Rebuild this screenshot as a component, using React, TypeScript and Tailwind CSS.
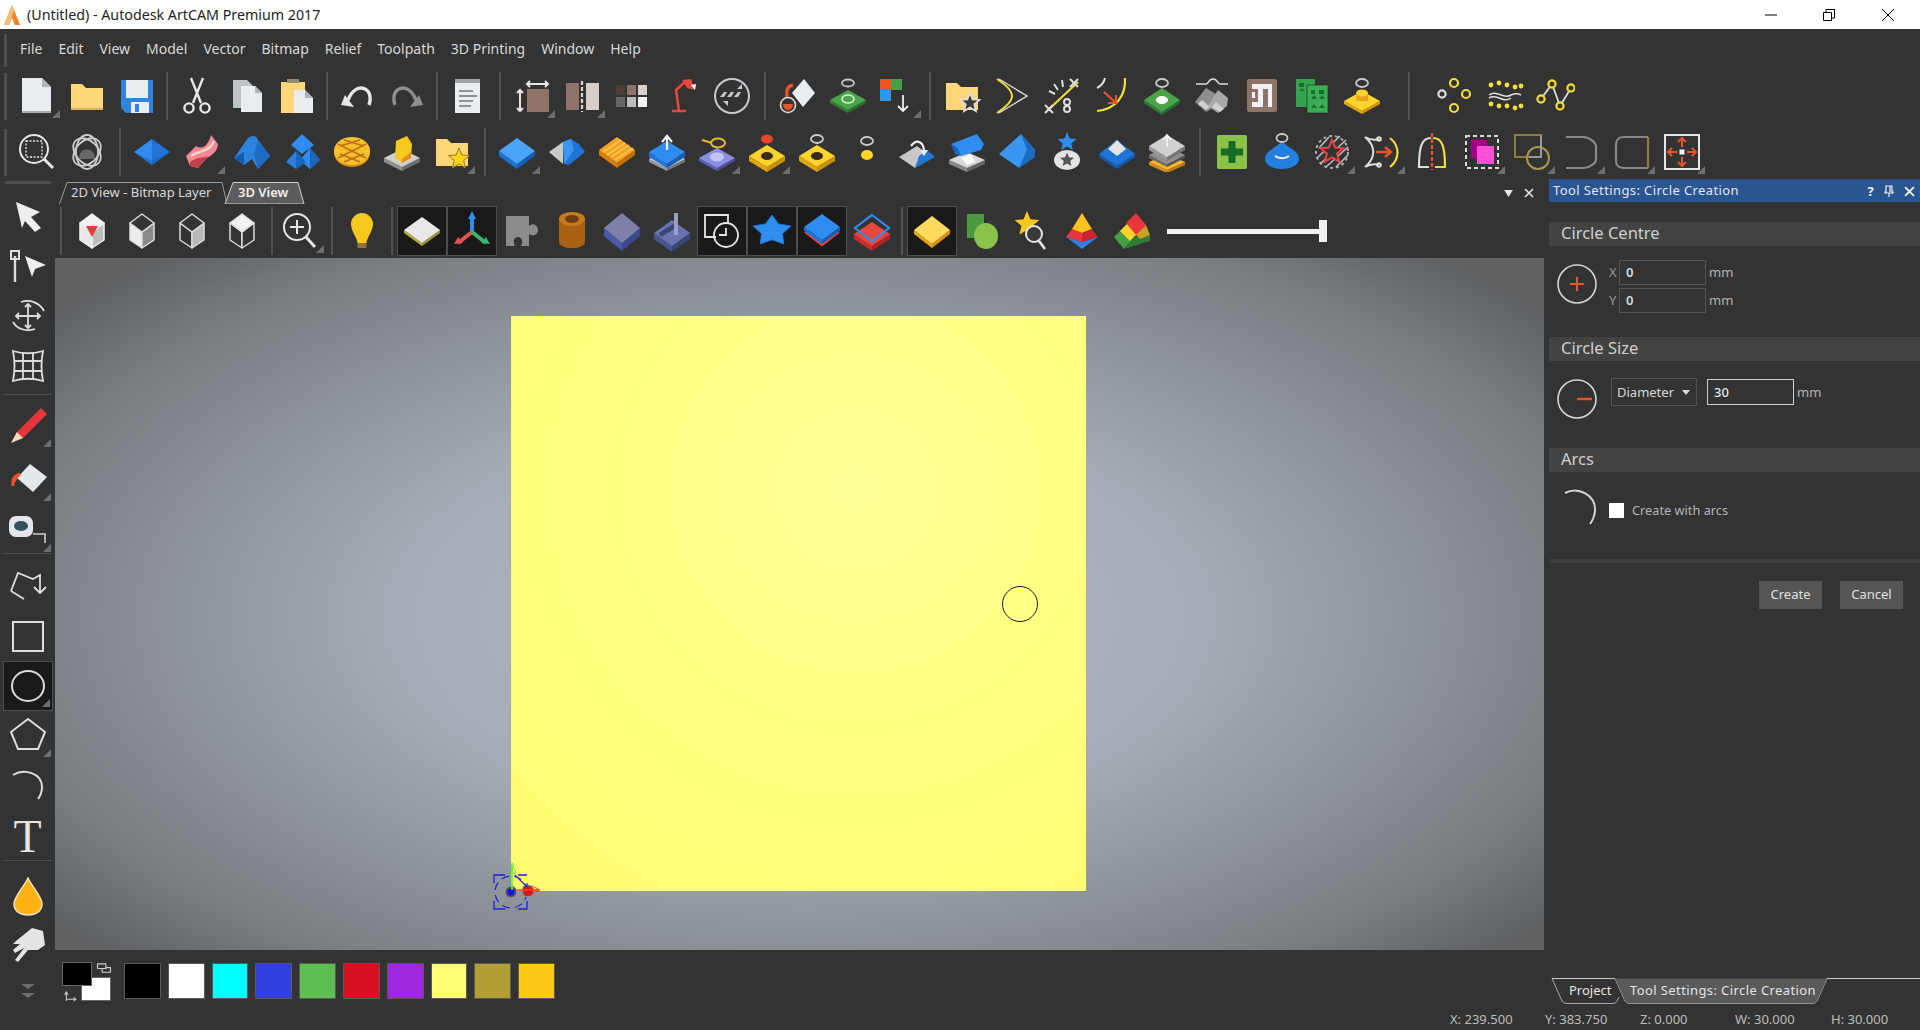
import React from 'react';

const W = '#e4e6e8';
const Y = '#f0dc3c';
const star = (cx: number, cy: number, R: number, r = R * 0.45) => {
  const p: string[] = [];
  for (let i = 0; i < 10; i++) {
    const a = -Math.PI / 2 + (i * Math.PI) / 5;
    const q = i % 2 ? r : R;
    p.push(`${(cx + q * Math.cos(a)).toFixed(1)},${(cy + q * Math.sin(a)).toFixed(1)}`);
  }
  return p.join(' ');
};
const Plate = ({ cx = 20, y = 22, w = 18, h = 11, d = 4, top, l, r }: { cx?: number; y?: number; w?: number; h?: number; d?: number; top: string; l: string; r: string }) => (
  <g>
    <polygon points={`${cx - w},${y} ${cx},${y + h} ${cx},${y + h + d} ${cx - w},${y + d}`} fill={l} />
    <polygon points={`${cx + w},${y} ${cx},${y + h} ${cx},${y + h + d} ${cx + w},${y + d}`} fill={r} />
    <polygon points={`${cx},${y - h} ${cx + w},${y} ${cx},${y + h} ${cx - w},${y}`} fill={top} />
  </g>
);
const Ring = ({ x = 20, y = 6, rx = 5, ry = 4, c = '#c8c8c8' }: { x?: number; y?: number; rx?: number; ry?: number; c?: string }) => (
  <ellipse cx={x} cy={y} rx={rx} ry={ry} fill="none" stroke={c} strokeWidth={1.8} />
);
const Folder = ({ c = '#ffd77a' }: { c?: string }) => <path d="M4 7h11l4 4h17v23H4Z" fill={c} />;
const Cube = ({ top, l, r, stroke = '#ddd' }: { top: string; l: string; r: string; stroke?: string }) => (
  <g stroke={stroke} strokeWidth={1.5} strokeLinejoin="round">
    <polygon points="8,12 20,21 20,37 8,29" fill={l} />
    <polygon points="32,12 20,21 20,37 32,29" fill={r} />
    <polygon points="20,3 32,12 20,21 8,12" fill={top} />
  </g>
);

const ICONS: Record<string, React.ReactNode> = {
  new: <g><path d="M5 2H25L34 11V37H5Z" fill="#e9edf1" /><path d="M25 2L34 11H25Z" fill="#aeb4b8" /><rect x="5" y="35" width="29" height="2" fill="#a9adb0" /></g>,
  open: <g><path d="M4 8h11l4 4h17v22H4Z" fill="#ffd77a" /><rect x="4" y="32" width="32" height="2" fill="#d9b45f" /></g>,
  save: <g><path d="M4 4H36V37H9L4 32Z" fill="#2f86dc" /><rect x="9" y="4" width="22" height="18" fill="#e9eef2" /><rect x="14" y="26" width="18" height="11" fill="#e9eef2" /><rect x="18" y="28" width="4" height="8" fill="#2f86dc" /></g>,
  cut: <g stroke={W} strokeWidth={2.4} fill="none"><path d="M14 2L24 27M26 2L16 27" /><circle cx="12" cy="32" r="4.6" /><circle cx="28" cy="32" r="4.6" /></g>,
  copy: <g><path d="M6 4H20L26 10V32H6Z" fill="#bfc4c6" /><path d="M14 10H28L35 17V36H14Z" fill="#e9edf1" /><path d="M28 10L35 17H28Z" fill="#aeb4b8" /></g>,
  paste: <g><rect x="4" y="6" width="24" height="31" fill="#ffd77a" /><rect x="10" y="3" width="12" height="4" fill="#9a8b6a" /><path d="M17 14H28L36 22V37H17Z" fill="#e9edf1" /><path d="M28 14L36 22H28Z" fill="#aeb4b8" /></g>,
  undo: <g fill="none" stroke={W} strokeWidth={3.4}><path d="M11 24C15 14 22 10 28 13C34 16 34 24 32 29" /><path d="M4 29L17 31L8 19Z" fill={W} stroke="none" /></g>,
  redo: <g fill="none" stroke="#8f8f8f" strokeWidth={3.4}><path d="M29 24C25 14 18 10 12 13C6 16 6 24 8 29" /><path d="M36 29L23 31L32 19Z" fill="#8f8f8f" stroke="none" /></g>,
  note: <g><rect x="8" y="3" width="25" height="34" fill="#e9edf1" /><rect x="8" y="3" width="25" height="4" fill="#9da3a6" /><path d="M12 15H26M12 20H30M12 25H26M12 30H24" stroke="#8b9296" strokeWidth={1.8} /></g>,
  resize: <g><rect x="15" y="13" width="22" height="23" fill="#8f7268" /><path d="M15 8H36M18 5L15 8L18 11M33 5L36 8L33 11M8 14V35M5 17L8 14L11 17M5 32L8 35L11 32" stroke={W} strokeWidth={2} fill="none" /></g>,
  split: <g><rect x="4" y="7" width="13" height="27" fill="#8f7268" /><rect x="24" y="7" width="13" height="27" fill="#d8cdc9" /><path d="M20 5V36" stroke="#d8d8d8" strokeWidth={2.2} strokeDasharray="4 2" /></g>,
  tiles: <g><rect x="4" y="9" width="9" height="10" fill="#4f3c37" /><rect x="15" y="9" width="9" height="10" fill="#8f7268" /><rect x="26" y="9" width="9" height="10" fill="#d9cfcb" /><rect x="4" y="21" width="9" height="10" fill="#666" /><rect x="15" y="21" width="9" height="10" fill="#bdbdbd" /><rect x="26" y="21" width="9" height="10" fill="#f3f3f3" /></g>,
  lamp: <g><path d="M10 35H24M17 35L14 14L24 5" stroke="#e8473f" strokeWidth={2.6} fill="none" /><path d="M20 4L29 3L33 14L25 12Z" fill="#e8473f" /><path d="M29 9L34 8L33 14Z" fill="#fff" /></g>,
  circleDots: <g><circle cx="20" cy="20" r="17" fill="none" stroke="#c9c9d0" strokeWidth={2} /><path d="M8 21l4-5h3l-3 5ZM15 21l4-5h3l-3 5ZM22 21l4-5h3l-3 5Z" fill="#c9c9d0" /><path d="M25 13l5-5v5ZM11 25l5 5v-5Z" fill="#c9c9d0" /></g>,
  pour: <g><polygon points="26,3 37,17 25,31 14,17" fill="#e9edf1" /><path d="M15 9C9 10 8 15 9 21" stroke="#e8552a" strokeWidth={3.4} fill="none" /><circle cx="10" cy="29" r="7.5" fill="none" stroke="#ddd" strokeWidth={1.6} /><path d="M5 28H15C15 32 12 34 10 34C8 34 5 32 5 28Z" fill="#e8552a" /></g>,
  greenRing: <g><Plate y={24} h={10} d={3} top="#4aa548" l="#2f8037" r="#276f30" /><ellipse cx="20" cy="23" rx="6" ry="4" fill="none" stroke="#d8ecd8" strokeWidth={1.6} /><Ring y={7} rx={6} ry={3.5} /></g>,
  palette: <g><rect x="2" y="3" width="11" height="11" fill="#f4511e" /><rect x="13" y="3" width="11" height="11" fill="#43a047" /><rect x="2" y="14" width="11" height="11" fill="#2f96e8" /><path d="M25 19V35M20 30L25 35L30 30" stroke="#eee" strokeWidth={1.8} fill="none" /></g>,
  folderStar: <g><Folder /><polygon points={star(28, 27, 10)} fill="#3a3a3a" stroke="#ddd" strokeWidth={1.8} /></g>,
  chevronY: <g fill="none" strokeWidth={2}><path d="M5 3C14 9 20 15 20 20C20 25 14 31 5 37" stroke={Y} /><path d="M7 3L35 20L7 37" stroke="#ddd" strokeWidth={1.4} /></g>,
  cutDots: <g stroke="#ddd" strokeWidth={2} fill="none"><path d="M5 35L36 6" stroke={Y} strokeWidth={2.2} /><path d="M3 29L11 37M3 37L11 29M28 3L36 11M28 11L36 3M12 8L16 14M20 4L21 11M7 15L13 18" /><circle cx="25" cy="26" r="3" /><circle cx="25" cy="33" r="3" /></g>,
  curveArrow: <g fill="none"><path d="M33 2C34 20 24 33 5 35" stroke={Y} strokeWidth={2.2} /><path d="M13 2C12 6 9 10 5 12" stroke="#ddd" strokeWidth={2} /><path d="M12 16L24 27M24 19V27H16" stroke="#e8552a" strokeWidth={2.2} /></g>,
  greenDot: <g><Plate y={24} h={12} d={3} top="#4aa548" l="#2f8037" r="#276f30" /><ellipse cx="20" cy="24" rx="6" ry="4" fill="#fff" /><Ring y={7} rx={6} ry={4} /></g>,
  clamps: <g><path d="M4 8H14C17 8 16 3 21 3C26 3 25 8 28 8H36" stroke="#ddd" strokeWidth={1.6} fill="none" /><polygon points="3,26 14,12 24,18 24,30 14,36" fill="#8e8e8e" /><polygon points="16,30 26,14 36,22 35,30 26,37" fill="#a9a9a9" /><polygon points="6,28 14,34 18,31 10,24" fill="#d0d0d0" /><polygon points="20,31 28,36 32,33 24,26" fill="#d0d0d0" /></g>,
  maze: <g><rect x="5" y="3" width="30" height="33" rx="2" fill="#8f7268" /><path d="M10 8H30V31H26V13H21V31H10V26H16V13H10Z" fill="#f2f2f2" /><rect x="10" y="16" width="3" height="6" fill="#f2f2f2" /></g>,
  greenDocs: <g><rect x="4" y="3" width="19" height="28" fill="#35a24d" /><rect x="15" y="9" width="21" height="28" fill="#3bae55" stroke="#2a2a2a" strokeWidth={0.7} /><path d="M19 14h4v4h-4ZM27 14h5v4h-5ZM19 23l3-4 3 4ZM27 23l3-4 3 4ZM19 32l3-4 3 4ZM27 32l3-4 3 4ZM7 7h5v4H7ZM7 15l3-3 3 3Z" fill="#1c6b31" /></g>,
  yellowRing: <g><Plate y={25} h={10} d={3} top="#ffd42a" l="#e8a417" r="#d69310" /><rect x="14" y="17" width="12" height="8" fill="#e8a417" /><ellipse cx="20" cy="17" rx="6" ry="3.5" fill="#ffd42a" /><Ring y={7} rx={6} ry={4} /></g>,
  dots: <g fill="none" strokeWidth={2.2} stroke={Y}><circle cx="19" cy="7" r="4" /><circle cx="7" cy="18" r="3.6" stroke="#ddd" /><circle cx="31" cy="18" r="4" /><circle cx="19" cy="32" r="4" /></g>,
  wavyDots: <g><g fill={Y}><circle cx="6" cy="9" r="2.4" /><circle cx="14" cy="7" r="2.4" /><circle cx="22" cy="9" r="2.4" /><circle cx="30" cy="11" r="2.4" /><circle cx="36" cy="10" r="2.4" /><circle cx="6" cy="28" r="2.4" /><circle cx="14" cy="30" r="2.4" /><circle cx="22" cy="30" r="2.4" /><circle cx="30" cy="32" r="2.4" /><circle cx="36" cy="30" r="2.4" /></g><path d="M4 19C12 13 18 24 26 19C30 17 34 18 36 19M4 22C12 17 18 28 26 22" stroke="#ddd" strokeWidth={1.5} fill="none" /></g>,
  polyDots: <g fill="#3a3a20" stroke={Y} strokeWidth={2.2}><path d="M6 23L17 8L25 30L36 12" stroke="#ddd" strokeWidth={1.8} fill="none" /><circle cx="6" cy="23" r="3.6" /><circle cx="17" cy="8" r="3.6" /><circle cx="25" cy="30" r="3.6" /><circle cx="36" cy="12" r="3.6" /></g>,

  zoomBox: <g fill="none" stroke={W} strokeWidth={2}><circle cx="17" cy="17" r="14" /><rect x="9" y="9" width="16" height="16" strokeDasharray="2 1.5" strokeWidth={1.3} /><path d="M27 27L36 36" strokeWidth={3} /></g>,
  atom: <g fill="none" stroke="#ccc" strokeWidth={1.8}><ellipse cx="20" cy="20" rx="11" ry="17" /><ellipse cx="20" cy="20" rx="16" ry="11" transform="rotate(45 20 20)" /><ellipse cx="20" cy="20" rx="16" ry="11" transform="rotate(-45 20 20)" /><path d="M12 27C12 14 28 14 28 27Z" fill="#666" stroke="none" /></g>,
  bluePyr: <g><polygon points="2,20 20,7 20,33" fill="#2f8cf0" /><polygon points="38,20 20,7 20,33" fill="#1f74d6" /><polygon points="2,20 20,33 38,20 20,29" fill="#1560b8" opacity={0.6} /></g>,
  redS: <g><path d="M4 24L14 14C20 18 26 14 29 3L36 12C36 20 28 24 24 27L16 36L8 34Z" fill="#f08a90" /><path d="M9 24C18 18 28 20 32 9" stroke="#fbd4d6" strokeWidth={2.4} fill="none" /><path d="M8 30C14 25 20 26 27 24L16 36L8 34Z" fill="#c43f4b" /></g>,
  blueCloth: <g><path d="M2 26L16 6C20 3 24 3 26 8L38 24L26 37L20 27L12 33Z" fill="#2c84e0" /><path d="M26 8L38 24L26 37L22 22Z" fill="#1d6cc4" /><path d="M2 26L12 20L12 33Z" fill="#175ca8" /></g>,
  bluePyrs: <g><polygon points="20,2 32,13 20,22 9,13" fill="#2f8cf0" /><polygon points="4,30 14,19 24,30 14,37" fill="#2b80de" /><polygon points="18,28 28,16 38,28 28,37" fill="#2f8cf0" /><polygon points="28,16 38,28 28,37" fill="#1a66bd" /><polygon points="14,19 24,30 14,37" fill="#1a66bd" /></g>,
  waffle: <g><ellipse cx="20" cy="21" rx="18" ry="14" fill="#d98a16" /><ellipse cx="20" cy="19" rx="18" ry="14" fill="#f6c02c" /><path d="M6 12L34 26M6 26L34 12M12 8L32 14M8 22L28 30M28 8L8 14M32 22L12 30" stroke="#b96f12" strokeWidth={1.5} /></g>,
  yellowPlate: <g><Plate y={26} w={18} h={9} d={4} top="#cfcfcf" l="#8f8f8f" r="#6d6d6d" /><polygon points="13,25 14,9 25,4 30,12 29,26 20,31" fill="#f7c91e" /><polygon points="29,20 29,26 20,31 20,27" fill="#e88b1e" /></g>,
  folderStarY: <g><Folder /><polygon points={star(27, 27, 11)} fill="#ffd21e" stroke="#8f7a23" strokeWidth={1} /></g>,
  blueDia: <g><Plate y={19} h={13} d={5} top="#4aa4f8" l="#1a73d2" r="#145fb3" /></g>,
  halfDia: <g><polygon points="2,20 16,10 16,32" fill="#c9c9c9" /><polygon points="16,10 24,7 32,12 38,20 22,33 17,32" fill="#1f74d6" /><polygon points="16,10 24,7 27,18 17,32" fill="#3a96f0" /></g>,
  stripes: <g><Plate y={18} h={13} d={5} top="#f7a41d" l="#d97e0e" r="#c46f08" /><path d="M6 20L24 8M10 23L28 11M14 25L32 13M18 28L36 16" stroke="#ffcb6b" strokeWidth={1.5} /></g>,
  blueUp: <g><Plate y={27} h={9} d={3} top="#cfcfcf" l="#9a9a9a" r="#777" /><Plate y={20} h={11} d={5} top="#2f8cf0" l="#1f74d6" r="#175db3" /><path d="M20 18V5M15 10L20 4L25 10" stroke="#eee" strokeWidth={2.2} fill="none" /></g>,
  ringPlate: <g><Plate y={26} h={10} d={3} top="#8c8fe0" l="#5d60b6" r="#4b4ea0" /><ellipse cx="20" cy="25" rx="7" ry="4.5" fill="#c3c5f2" /><ellipse cx="21" cy="11" rx="7" ry="4.5" fill="none" stroke="#e8b92c" strokeWidth={2} /><path d="M5 8L15 11" stroke="#e8b92c" strokeWidth={2} /></g>,
  redDotPlate: <g><Plate y={24} h={11} d={5} top="#ffd42a" l="#e0a512" r="#c99110" /><ellipse cx="20" cy="24" rx="6" ry="4" fill="#3a2a1a" /><ellipse cx="20" cy="7" rx="6" ry="4.6" fill="#e8452c" /></g>,
  yellowRingPlate: <g><Plate y={24} h={11} d={5} top="#ffd42a" l="#e0a512" r="#c99110" /><ellipse cx="20" cy="24" rx="6" ry="4" fill="#3a2a1a" /><Ring y={7} rx={6} ry={4} /></g>,
  ringDot: <g><Ring y={9} rx={6} ry={4} /><ellipse cx="20" cy="23" rx="6" ry="5" fill="#ffd42a" /></g>,
  blueTwist: <g><polygon points="2,25 20,14 28,20 18,36" fill="#c8c8c8" /><polygon points="18,36 38,25 30,18 22,24" fill="#2478d4" /><path d="M14 14C20 6 27 10 27 20" stroke="#eee" strokeWidth={2.2} fill="none" /><path d="M23 18L27 24L31 18" fill="#eee" /></g>,
  blueSheet: <g><Plate y={28} h={8} d={4} top="#d8d8d8" l="#888" r="#666" /><path d="M4 12L30 2L37 12L34 18L14 24L10 16Z" fill="#2f8cf0" /><path d="M4 12L10 16L14 24L8 22Z" fill="#1a66bd" /><path d="M14 26L24 22L28 30L20 33Z" fill="#fff" /></g>,
  blueWedge: <g><polygon points="2,22 24,2 38,18 22,36" fill="#3a96f0" /><polygon points="24,2 38,18 38,25 22,36 30,18" fill="#1d6cc4" /></g>,
  starDisc: <g><polygon points={star(20, 10, 10)} fill="#2f8cf0" /><ellipse cx="20" cy="28" rx="13" ry="10" fill="#e4e4e4" /><polygon points={star(20, 28, 7.5)} fill="#555" /></g>,
  whiteBlue: <g><polygon points="2,22 20,8 38,22 20,34" fill="#1f74d6" /><polygon points="11,17 20,8 29,17 20,24" fill="#e4e4e4" /><polygon points="2,22 20,34 38,22 38,25 20,37 2,25" fill="#155cb0" /></g>,
  stack: <g><Plate y={30} h={8} d={3} top="#f7b52c" l="#d68c12" r="#c47d0c" /><Plate y={23} h={9} d={3} top="#8f8f8f" l="#6d6d6d" r="#555" /><Plate y={14} h={11} d={4} top="#d0d0d0" l="#999" r="#777" /><path d="M20 15V4M16 8L20 3L24 8" stroke="#f2f2f2" strokeWidth={1.8} fill="none" /></g>,
  plus: <g><rect x="5" y="3" width="30" height="34" rx="2" fill="#8bc34a" /><path d="M20 9V31M9 20H31" stroke="#1b6a2a" strokeWidth={7} /></g>,
  blueBall: <g><path d="M20 9C25 16 37 18 37 27C37 33 29 37 20 37C11 37 3 33 3 27C3 18 15 16 20 9Z" fill="#2480de" /><path d="M13 24C17 27 23 27 27 24" stroke="#eaf4ff" strokeWidth={2} fill="none" /><Ring y={6} rx={5.5} ry={4} /></g>,
  starHatch: <g><circle cx="20" cy="20" r="16" fill="none" stroke="#aaa" strokeWidth={2} strokeDasharray="3 3" /><path d="M7 16L17 5M5 26L28 4M8 32L34 8M14 35L36 15M24 35L36 23" stroke="#bbb" strokeWidth={1.6} /><polygon points={star(20, 20, 12)} fill="#333" stroke="#e8473f" strokeWidth={2} /></g>,
  curveR: <g fill="none" strokeWidth={2}><path d="M3 5C8 8 14 8 17 7M3 35C8 32 14 32 17 33M3 5C14 14 14 26 3 35" stroke="#ddd" /><circle cx="17" cy="7" r="1.8" stroke="#ddd" /><circle cx="17" cy="33" r="1.8" stroke="#ddd" /><path d="M28 6C38 14 38 27 28 35" stroke={Y} strokeWidth={2.2} /><path d="M14 20H28M23 15L29 20L23 25" stroke="#e8552a" strokeWidth={2.4} /></g>,
  halfArc: <g fill="none" strokeWidth={2.2}><path d="M19 6C10 6 7 14 7 35H17" stroke="#ddd" /><path d="M21 6C30 6 33 14 33 35H23" stroke={Y} /><path d="M20 1V38" stroke="#e8552a" strokeDasharray="4 2" /></g>,
  pink: <g><rect x="4" y="4" width="32" height="32" fill="none" stroke="#ddd" strokeWidth={2} strokeDasharray="4 3" /><rect x="9" y="8" width="16" height="18" fill="#a4008c" /><rect x="15" y="14" width="17" height="18" fill="#ff4fd8" /></g>,
  rectCircle: <g fill="none" strokeWidth={2} stroke="#8d7f35"><path d="M3 3H29V25H3Z" /><circle cx="26" cy="26" r="11" stroke="#a59a4a" /><path d="M29 3V25H17" stroke="#999" /></g>,
  sBracket: <g fill="none" stroke="#888" strokeWidth={2.2}><path d="M4 5H22C30 6 34 12 34 14V28C34 30 30 35 22 36H4" /></g>,
  roundRect: <g fill="none" strokeWidth={2.2}><path d="M36 5H12C6 5 4 9 4 12V29C4 32 6 36 12 36H36" stroke="#888" /><path d="M36 5V36" stroke="#8d7f35" /></g>,
  moveArrows: <g><rect x="3" y="3" width="34" height="34" fill="none" stroke={W} strokeWidth={2} /><rect x="17.5" y="17.5" width="5" height="5" fill="#fff" /><g stroke="#e8552a" strokeWidth={2} fill="none"><path d="M20 15V7M16 10L20 6L24 10M20 25V33M16 30L20 34L24 30M15 20H7M10 16L6 20L10 24M25 20H33M30 16L34 20L30 24" /></g></g>,

  cubeRed: <g><Cube top="#f1f1f1" l="#e8e8e8" r="#bdbdbd" stroke="#f1f1f1" /><polygon points="14,15 26,15 20,26" fill="#e23b3b" /></g>,
  cubeA: <Cube top="#333" l="#ececec" r="#8a8a8a" stroke="#ddd" />,
  cubeB: <Cube top="#333" l="#333" r="#b9b9b9" stroke="#ddd" />,
  cubeC: <Cube top="#f1f1f1" l="#333" r="#333" stroke="#ddd" />,
  zoomPlus: <g fill="none" stroke={W} strokeWidth={2}><circle cx="16" cy="16" r="13" /><path d="M16 9V23M9 16H23" /><path d="M25 26L34 36" strokeWidth={3} /></g>,
  bulb: <g><path d="M20 2C27 2 31 8 31 13C31 20 25 26 24.5 32H15.5C15 26 9 20 9 13C9 8 13 2 20 2Z" fill="#f7c91e" /><rect x="15.5" y="32" width="9" height="5" fill="#8f7240" /></g>,
  plateY: <g><Plate y={19} h={13} d={3} top="#e8e8e8" l="#b8ae3c" r="#a09630" /></g>,
  axes: <g><path d="M20 21V5" stroke="#2f8cf0" strokeWidth={4} /><polygon points="20,0 24,8 16,8" fill="#2f8cf0" /><path d="M20 21L6 32" stroke="#e25252" strokeWidth={4} /><polygon points="2,33 6,26 11,32" fill="#e25252" /><path d="M20 21L34 32" stroke="#3eb36a" strokeWidth={4} /><polygon points="38,33 34,26 29,32" fill="#3eb36a" /></g>,
  puzzle: <path d="M4 5H27V15C31 11 36 14 36 19C36 24 31 26 27 23V35H19C22 29 19 26 16 26C13 26 10 29 13 35H4Z" fill="#8c8c8c" />,
  cyl: <g><path d="M7 8V31C7 35 13 37 20 37C27 37 33 35 33 31V8Z" fill="#a96013" /><ellipse cx="20" cy="8" rx="13" ry="7" fill="#c9791c" /><ellipse cx="20" cy="8" rx="7" ry="4" fill="#6f3f10" /></g>,
  block: <g><Plate y={17} h={15} d={8} top="#7d80a8" l="#4a5aa8" r="#3b4a8c" /></g>,
  toolBlock: <g><Plate y={22} h={13} d={6} top="#6a73ae" l="#4a5590" r="#3b4576" /><path d="M8 24L24 14" stroke="#3b4576" strokeWidth={5} /><rect x="22" y="2" width="4" height="22" fill="#9aa0c0" /></g>,
  clock: <g fill="none" stroke={W} strokeWidth={1.8}><path d="M14 26H3V4H26V13" /><circle cx="24" cy="24" r="12" /><path d="M24 17V24H17" /></g>,
  starB: <g transform="translate(0 4) scale(1 0.8)"><polygon points={star(20, 20, 20, 11)} fill="#2f8cf0" stroke="#1f74d6" strokeWidth={1} /></g>,
  layerBlue: <g><path d="M3 21L20 34L37 21" fill="none" stroke="#e8473f" strokeWidth={2.2} /><Plate y={16} h={13} d={4} top="#2f8cf0" l="#1f74d6" r="#175db3" /></g>,
  layerRed: <g><Plate y={23} h={12} d={5} top="#e8473f" l="#c62f2f" r="#a82525" /><polygon points="20,4 37,17 20,30 3,17" fill="none" stroke="#2f8cf0" strokeWidth={2.2} /></g>,
  diaY: <g><Plate y={19} h={14} d={4} top="#ffd95c" l="#e8a417" r="#d69310" /></g>,
  shapesG: <g><rect x="5" y="3" width="17" height="24" fill="#4c9a3f" /><ellipse cx="24" cy="25" rx="12" ry="13" fill="#8bc34a" /></g>,
  starZoom: <g><polygon points={star(15, 13, 13)} fill="#f7c91e" /><circle cx="22" cy="23" r="8" fill="#3a3a3a" stroke={W} strokeWidth={2} /><path d="M27 30L33 38" stroke={W} strokeWidth={2.6} /></g>,
  pyramid: <g><polygon points="20,2 30,18 20,22 10,18" fill="#ffc21e" /><polygon points="10,18 20,22 20,31 4,26" fill="#e8373a" /><polygon points="30,18 20,22 20,31 36,26" fill="#c9252e" /><polygon points="4,26 20,31 36,26 20,38" fill="#2f7ee0" /></g>,
  rainbow: <g><polygon points="2,26 14,14 22,26 12,38" fill="#43a047" /><polygon points="8,20 20,8 28,20 18,30" fill="#ffd42a" /><polygon points="14,12 24,2 34,14 24,24" fill="#e8373a" /><polygon points="12,38 22,26 38,24 38,30" fill="#2e7d32" /><polygon points="24,24 34,14 38,24 28,28" fill="#c9a020" /></g>,

  arrow: <polygon points="8,6 32,16 23,21 33,32 27,36 17,25 14,32" fill="#eee" />,
  node: <g><path d="M7 10V36" stroke="#ddd" strokeWidth={2.4} /><rect x="3" y="5" width="8" height="8" fill="none" stroke="#ddd" strokeWidth={2} /><polygon points="17,10 38,19 27,23 24,31" fill="#eee" /></g>,
  move: <g stroke="#ddd" strokeWidth={1.8} fill="none"><path d="M20 8V32M8 20H32M17 11L20 8L23 11M17 29L20 32L23 29M11 17L8 20L11 23M29 17L32 20L29 23" /><path d="M5 26C9 33 18 36 27 33M13 6C22 3 32 7 36 15" /></g>,
  mesh: <g stroke="#ddd" strokeWidth={1.8} fill="none"><path d="M5 5C15 8 25 8 35 5C33 15 33 25 35 35C25 32 15 32 5 35C7 25 7 15 5 5Z" /><path d="M6 15H34M6 25H34M15 6.5V33.5M25 6.5V33.5" /></g>,
  pencil: <g><polygon points="3,38 9,27 33,3 39,9 15,33" fill="#e8373a" /><polygon points="3,38 9,27 15,33" fill="#f3dcb4" /></g>,
  eraser: <g><polygon points="22,5 39,18 25,33 9,19" fill="#e4e8ec" /><path d="M13 15C6 16 3 20 4 27L10 19Z" fill="#e8552a" /><path d="M12 15C6 17 4 21 5 27" stroke="#e8552a" strokeWidth={3} fill="none" /></g>,
  tape: <g><rect x="1" y="6" width="24" height="21" rx="7" fill="#e4e8ec" /><ellipse cx="13" cy="16" rx="7" ry="5" fill="#37525f" /><path d="M25 24H37V33" stroke="#ccc" strokeWidth={1.6} fill="none" /></g>,
  poly: <g fill="none" stroke="#ddd" strokeWidth={1.8}><path d="M3 24L10 6L25 12L32 8V25M26 20L32 26L38 20M3 24L16 32" /></g>,
  rect: <rect x="5" y="6" width="30" height="29" fill="none" stroke="#ddd" strokeWidth={2} />,
  ellipse: <ellipse cx="20" cy="20" rx="16" ry="15" fill="none" stroke="#ddd" strokeWidth={2} />,
  pentagon: <polygon points="20,4 37,17 30,34 10,34 3,17" fill="none" stroke="#ddd" strokeWidth={2} />,
  arc: <path d="M5 10C16 3 34 8 34 22C34 26 33 30 30 34" fill="none" stroke="#ddd" strokeWidth={2} />,
  drop: <path d="M20 1C24 10 34 19 34 27C34 34 28 38 20 38C12 38 6 34 6 27C6 19 16 10 20 1Z" fill="#ffb313" stroke="#f2e6c8" strokeWidth={1.4} />,
  hand: <path d="M8 16L24 3L35 6L37 20L30 25L20 25L10 37L7 35L16 23L7 28L5 25L12 19L5 19Z" fill="#e4e4e4" />,
  chevrons: <path d="M13 13L20 18L27 13H13ZM13 22L20 27L27 22H13Z" fill="#6d6d6d" />,
};

const Corner = () => (
  <svg viewBox="0 0 8 8" className="absolute right-[2px] bottom-[3px] w-[8px] h-[8px]"><polygon points="8,0 8,8 0,8" fill="#6e6e6e" /></svg>
);

const SEP: Record<string, string> = {
  a: 'w-[10px]',
  b: 'w-[15px]',
  c: 'w-[16px]',
  d: 'w-[9px]',
  e: 'w-[11px]',
  f: 'w-[43px]',
  g: 'w-[14px]',
};
const Btn = ({ name }: { name: string }) => {
  const corner = name.includes('+');
  const on = name.includes('*');
  const k = name.replace(/[+*]/g, '');
  return (
    <div className={`relative w-[50px] h-[50px] shrink-0 flex items-center justify-center ${on ? 'bg-[#1a1a1a] border border-[#4e4e4e]' : ''}`}>
      {k === 'T' ? (
        <span className="text-[46px] leading-none text-[#e4e4e4] font-['Liberation_Serif',serif]">T</span>
      ) : (
        <svg viewBox="0 0 40 40" className="w-[40px] h-[40px]">{ICONS[k]}</svg>
      )}
      {corner && <Corner />}
    </div>
  );
};
const Row = ({ items }: { items: string }) => (
  <>
    {items.split(' ').map((t, i) =>
      t.startsWith('|') ? (
        <div key={i} className={`${SEP[t[1]]} h-[48px] shrink-0 flex justify-center`}>
          <div className="w-[2px] h-full bg-[#525252]" />
        </div>
      ) : (
        <Btn key={i} name={t} />
      )
    )}
  </>
);
const Grip = () => <div className="w-[3px] h-[47px] bg-[#4e4e4e] shrink-0 mr-[5px]" />;

const MENU = ['File', 'Edit', 'View', 'Model', 'Vector', 'Bitmap', 'Relief', 'Toolpath', '3D Printing', 'Window', 'Help'];
const SW = ['bg-[#000000]', 'bg-[#ffffff]', 'bg-[#00ffff]', 'bg-[#303fdd]', 'bg-[#5cbf50]', 'bg-[#d81022]', 'bg-[#a126e0]', 'bg-[#ffff73]', 'bg-[#b29e34]', 'bg-[#ffc915]'];

const Section = ({ t }: { t: string }) => (
  <div className="h-[24px] bg-[#434343] pl-[12px] pb-[2px] flex items-center text-[16.500px] text-[#cfcfcf]">{t}</div>
);
const CircleIcon = ({ kind }: { kind: string }) => (
  <svg viewBox="0 0 40 40" className="w-[40px] h-[40px] shrink-0">
    {kind === 'arc' ? (
      <path d="M7 6C20 -1 38 8 37 24C36.500 29 35 33 32 37" fill="none" stroke="#d5d5d5" strokeWidth={2} />
    ) : (
      <g>
        <circle cx="20" cy="20" r="19" fill="none" stroke="#d5d5d5" strokeWidth={1.6} />
        {kind === 'plus' ? <path d="M20 13V27M13 20H27" stroke="#e8552a" strokeWidth={2} /> : <path d="M20 20H35" stroke="#e8552a" strokeWidth={2.4} />}
      </g>
    )}
  </svg>
);
const Field = ({ label, v }: { label: string; v: string }) => (
  <div className="flex items-center h-[25px]">
    <span className="w-[10px] text-[13px] text-[#999] pt-[1px]">{label}</span>
    <div className="w-[87px] h-[25px] border border-[#555] flex items-center pl-[6px] pt-[1px] text-[13px] font-semibold text-[#d8d8d8]">{v}</div>
    <span className="ml-[3px] pt-[1px] text-[13px] text-[#b5b5b5]">mm</span>
  </div>
);

export default function App() {
  return (
    <div className="w-[1920px] h-[1030px] overflow-hidden flex flex-col bg-[#333333] font-['Noto_Sans','Open_Sans',sans-serif] text-[13px] text-[#d0d0d0]">
      {/* title bar */}
      <div className="h-[29px] bg-white shrink-0 flex items-center text-black">
        <svg viewBox="0 0 20 24" className="w-[18px] h-[22px] ml-[3px]">
          <polygon points="10,1 19,23 13,23 10,15 7,23 1,23" fill="#e8862a" />
          <polygon points="10,1 12,7 7,23 1,23" fill="#f4bd7a" />
        </svg>
        <span className="ml-[6px] text-[14.250px] text-[#222]">(Untitled) - Autodesk ArtCAM Premium 2017</span>
        <div className="ml-auto flex items-center">
          <svg viewBox="0 0 12 12" className="w-[12px] h-[12px] mr-[46px]"><path d="M0 6H12" stroke="#000" strokeWidth={1} /></svg>
          <svg viewBox="0 0 12 12" className="w-[12px] h-[12px] mr-[47px]"><path d="M0.500 3.500H8.500V11.500H0.500ZM3 3.500V0.500H11.500V9H8.500" fill="none" stroke="#000" strokeWidth={1} /></svg>
          <svg viewBox="0 0 12 12" className="w-[12px] h-[12px] mr-[26px]"><path d="M0 0L12 12M12 0L0 12" stroke="#000" strokeWidth={1} /></svg>
        </div>
      </div>
      {/* menu */}
      <div className="h-[42px] shrink-0 flex items-center pl-[4px]">
        <div className="w-[3px] h-[33px] bg-[#4e4e4e] mr-[13px]" />
        <div className="flex gap-[16px] pb-[3px] text-[14px] text-[#d8d8d8]">
          {MENU.map((m) => <span key={m}>{m}</span>)}
        </div>
      </div>
      {/* toolbars */}
      <div className="h-[50px] shrink-0 flex items-center pl-[4px]">
        <Grip />
        <Row items="new+ open save |a cut copy paste |a undo redo |a note |b resize+ split+ tiles lamp circleDots |c pour greenRing palette+ |g folderStar chevronY cutDots curveArrow greenDot clamps maze greenDocs yellowRing |f dots wavyDots polyDots" />
      </div>
      <div className="h-[50px] mt-[6px] shrink-0 flex items-center pl-[4px]">
        <Grip />
        <Row items="zoomBox atom |b bluePyr redS+ blueCloth bluePyrs waffle yellowPlate folderStarY+ |b blueDia+ halfDia stripes blueUp ringPlate+ redDotPlate+ yellowRingPlate ringDot blueTwist blueSheet blueWedge starDisc whiteBlue stack |b plus blueBall starHatch+ curveR+ halfArc pink+ rectCircle+ sBracket+ roundRect+ moveArrows+" />
      </div>
      {/* main */}
      <div className="flex-1 min-h-0 flex">
        {/* left tools */}
        <div className="w-[55px] shrink-0 flex flex-col items-center [&>*]:shrink-0">
          <div className="w-[46px] h-[3px] bg-[#4e4e4e] mt-[4px] mb-[7px]" />
          <Btn name="arrow" />
          <Btn name="node" />
          <Btn name="move" />
          <Btn name="mesh" />
          <div className="w-[49px] h-[1px] bg-[#4e4e4e] mt-[3px] mb-[5px]" />
          <Btn name="pencil+" />
          <div className="mt-[4px]"><Btn name="eraser+" /></div>
          <div className="mt-[1px]"><Btn name="tape+" /></div>
          <div className="w-[49px] h-[1px] bg-[#4e4e4e] -mt-[2px] mb-[8px]" />
          <Btn name="poly" />
          <div className="-mt-[1px]"><Btn name="rect" /></div>
          <Btn name="ellipse*+" />
          <div className="-mt-[1px]"><Btn name="pentagon+" /></div>
          <Btn name="arc" />
          <div className="mt-[2px]"><Btn name="T" /></div>
          <div className="w-[49px] h-[1px] bg-[#4e4e4e] -mt-[2px] mb-[11px]" />
          <Btn name="drop" />
          <div className="-mt-[2px]"><Btn name="hand" /></div>
          <div className="-mt-[4px]"><Btn name="chevrons" /></div>
        </div>
        {/* centre */}
        <div className="w-[1489px] shrink-0 flex flex-col">
          {/* tabs */}
          <div className="h-[27px] shrink-0 relative flex items-end">
            <svg viewBox="0 0 1489 27" className="absolute inset-0 w-full h-full">
              <path d="M4.500 27L12 5.500H167L172 27" fill="none" stroke="#9a9a9a" />
              <path d="M170 27L178 5.500H243L249 27Z" fill="#5c5c5c" stroke="#cfcfcf" />
            </svg>
            <span className="relative ml-[16px] mb-[2px] w-[167px] text-[13px] leading-[20px] text-[#d8d8d8]">2D View - Bitmap Layer</span>
            <span className="relative mb-[2px] text-[13px] leading-[20px] font-semibold text-[#eee]">3D View</span>
            <div className="ml-auto mr-[10px] mb-[6px] flex items-center gap-[10px] relative">
              <svg viewBox="0 0 10 8" className="w-[11px] h-[7px]"><polygon points="0,0 10,0 5,8" fill="#e6e6e6" /></svg>
              <svg viewBox="0 0 10 10" className="w-[10px] h-[10px]"><path d="M1 1L9 9M9 1L1 9" stroke="#e6e6e6" strokeWidth={1.6} /></svg>
            </div>
          </div>
          {/* view toolbar */}
          <div className="h-[54px] shrink-0 flex items-center">
            <div className="w-[12px] h-[48px] shrink-0 flex justify-center"><div className="w-[2px] h-full bg-[#525252]" /></div>
            <Row items="cubeRed cubeA cubeB cubeC |d zoomPlus+ |e bulb |a plateY* axes* puzzle cyl block toolBlock clock* starB* layerBlue* layerRed |a diaY* shapesG starZoom pyramid rainbow" />
            <div className="ml-[10px] w-[160px] h-[22px] flex items-center relative">
              <div className="w-full h-[5px] bg-[#f2f2f2]" />
              <div className="absolute right-0 top-0 w-[8px] h-[22px] bg-[#f2f2f2]" />
            </div>
          </div>
          {/* canvas */}
          <div className="h-[692px] shrink-0 relative bg-[radial-gradient(ellipse_64%_70%_at_50%_52%,#b0bac2_0%,#a4adb5_42%,#7b7f84_84%,#5f6163_100%)]">
            <div className="absolute left-[456px] top-[58px] w-[575px] h-[575px] bg-[radial-gradient(circle_at_60%_30%,#ffff98_0%,#ffff84_45%,#fffb6e_100%)]" />
            <div className="absolute left-[947px] top-[328px] w-[36px] h-[36px] rounded-full border border-[#1c1c1c]" />
            <svg viewBox="0 0 70 60" className="absolute left-[430px] top-[603px] w-[70px] h-[60px]">
              <circle cx="26" cy="31" r="16" fill="none" stroke="#1f1fd8" strokeWidth={1.2} strokeDasharray="8 5" />
              <path d="M9 22V14H20M33 14H42M9 40V48H20M33 48H42V40" fill="none" stroke="#1f1fd8" strokeWidth={1.3} />
              <circle cx="26" cy="31" r="6" fill="#555" stroke="#999" />
              <circle cx="26" cy="31" r="3.500" fill="#1010e8" />
              <circle cx="43" cy="30" r="6" fill="#a33" stroke="#999" />
              <circle cx="43" cy="30" r="3.500" fill="#e81010" />
              <path d="M27 4V29" stroke="#5df03c" strokeWidth={1.6} />
              <path d="M27 2L31 12L27 12Z" fill="none" stroke="#5df03c" />
              <path d="M32 29H54" stroke="#ff3b1f" strokeWidth={1.5} />
              <path d="M47 25L55 29L47 32" fill="none" stroke="#ff3b1f" />
              <path d="M30 14L42 26M38 26H42V22" fill="none" stroke="#3a2bb0" strokeWidth={1.2} />
            </svg>
          </div>
          {/* swatches */}
          <div className="flex-1 flex pl-[7px]">
            <div className="relative w-[50px] h-[40px] mt-[12px]">
              <div className="absolute left-[19px] top-[15px] w-[30px] h-[24px] bg-white border border-[#666]" />
              <div className="absolute left-0 top-0 w-[30px] h-[24px] bg-black border border-[#666]" />
              <svg viewBox="0 0 16 14" className="absolute left-[34px] top-0 w-[16px] h-[13px]"><path d="M1 7V2H10V7H1M6 7V11H15V6H10" fill="none" stroke="#d0d0d0" strokeWidth={1.2} /></svg>
              <svg viewBox="0 0 14 12" className="absolute left-[1px] top-[29px] w-[14px] h-[11px]"><path d="M3 11V2M1 4L3 1L5 4M3 9H13M11 7L13.500 9L11 11" fill="none" stroke="#d0d0d0" strokeWidth={1.1} /></svg>
            </div>
            <div className="ml-[12px] mt-[13px] flex gap-[7px]">
              {SW.map((c) => <div key={c} className={`w-[36.800px] h-[36px] border border-[#5a5a5a] ${c}`} />)}
            </div>
          </div>
        </div>
        {/* right panel */}
        <div className="w-[371px] ml-[5px] shrink-0 flex flex-col">
          <div className="mt-[2px] h-[23px] bg-[#2b5591] flex items-center pl-[4px] pr-[5px] pt-[1px] text-[13px] tracking-[0.4px] text-[#e2e6ec]">
            <span>Tool Settings: Circle Creation</span>
            <div className="ml-auto flex items-center gap-[8px]">
              <span className="font-bold text-[13px] leading-none text-[#eee] mr-[2px]">?</span>
              <svg viewBox="0 0 10 12" className="w-[10px] h-[12px]"><path d="M2 1H8V7H9V8H1V7H2ZM5 8V12M6 1V7" fill="none" stroke="#eee" strokeWidth={1.2} /></svg>
              <svg viewBox="0 0 10 10" className="w-[11px] h-[11px] ml-[2px]"><path d="M1 1L9 9M9 1L1 9" stroke="#eee" strokeWidth={1.8} /></svg>
            </div>
          </div>
          <div className="mt-[20px]"><Section t="Circle Centre" /></div>
          <div className="h-[91px] pl-[8px] pt-[14px] flex">
            <div className="mt-[4px]"><CircleIcon kind="plus" /></div>
            <div className="ml-[12px] flex flex-col gap-[3px]">
              <Field label="X" v="0" />
              <Field label="Y" v="0" />
            </div>
          </div>
          <Section t="Circle Size" />
          <div className="h-[87px] pl-[8px] pt-[17px] flex">
            <div className="mt-[1px]"><CircleIcon kind="minus" /></div>
            <div className="ml-[14px] w-[86px] h-[28px] border border-[#555] flex items-center pl-[5px] pt-[1px] text-[13px] text-[#d8d8d8]">
              Diameter
              <svg viewBox="0 0 8 5" className="w-[8px] h-[5px] ml-[8px]"><polygon points="0,0 8,0 4,5" fill="#ddd" /></svg>
            </div>
            <div className="ml-[10px] w-[87px] h-[26px] mt-[1px] border border-[#cfcfcf] flex items-center pl-[6px] pt-[1px] text-[13px] font-medium text-[#e4e4e4]">30</div>
            <span className="ml-[3px] mt-[5px] text-[13px] text-[#b5b5b5]">mm</span>
          </div>
          <Section t="Arcs" />
          <div className="h-[87px] pl-[9px] pt-[15px] flex">
            <CircleIcon kind="arc" />
            <div className="ml-[11px] mt-[16px] w-[15px] h-[15px] bg-white" />
            <span className="ml-[8px] mt-[14px] text-[12.750px] text-[#b5b5b5]">Create with arcs</span>
          </div>
          <div className="h-[4px] bg-[#3e3e3e]" />
          <div className="mt-[18px] flex justify-end gap-[18px] pr-[17px]">
            <div className="w-[63px] h-[28px] bg-[#555555] flex items-center justify-center text-[13px] text-[#e0e0e0]">Create</div>
            <div className="w-[63px] h-[28px] bg-[#555555] flex items-center justify-center text-[13px] text-[#e0e0e0]">Cancel</div>
          </div>
          {/* bottom tabs */}
          <div className="mt-auto mb-[3px] h-[28px] relative flex items-center">
            <svg viewBox="0 0 371 28" className="absolute inset-0 w-full h-full">
              <path d="M3 1.500L13 24Q15 26.500 18 26.500H64Q67 26.500 68 24L70 20" fill="none" stroke="#aaa" />
              <path d="M3 1.500H66L76 24Q78 26.500 80 26.500H263Q266 26.500 268 24L278 1.500H371" fill="none" stroke="#c8c8c8" />
              <path d="M66 1.500L76 24Q78 26.500 80 26.500H263Q266 26.500 268 24L278 1.500Z" fill="#5a5a5a" />
            </svg>
            <span className="relative ml-[20px] w-[61px] text-[13px] text-[#e4e4e4]">Project</span>
            <span className="relative text-[13px] tracking-[0.4px] text-[#e4e4e4]">Tool Settings: Circle Creation</span>
          </div>
        </div>
      </div>
      {/* status */}
      <div className="h-[22px] shrink-0 pt-[2px] flex justify-end items-center text-[13px] text-[#bdbdbd]">
        <span className="w-[95px]">X: 239.500</span>
        <span className="w-[95px]">Y: 383.750</span>
        <span className="w-[95px]">Z: 0.000</span>
        <span className="w-[96px]">W: 30.000</span>
        <span className="w-[89px]">H: 30.000</span>
      </div>
    </div>
  );
}
